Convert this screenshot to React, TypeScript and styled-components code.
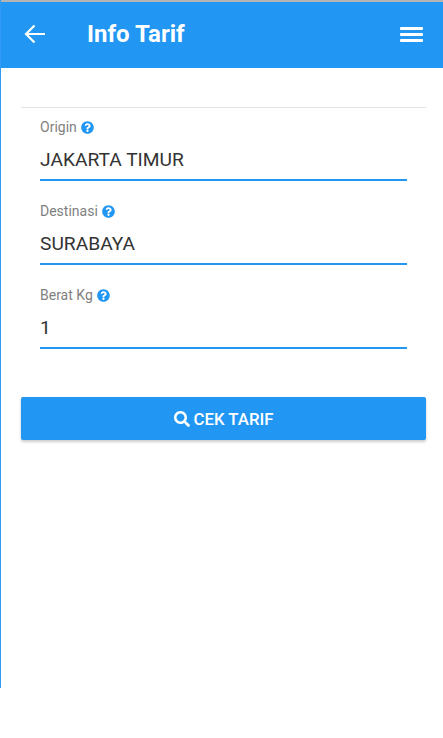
import React from "react";
import styled, { createGlobalStyle } from "styled-components";
import { FaQuestionCircle, FaSearch } from "react-icons/fa";

const GlobalStyle = createGlobalStyle`
  html, body {
    margin: 0;
    padding: 0;
    background: #fff;
    font-family: Roboto, "Liberation Sans", sans-serif;
  }
`;

const Screen = styled.div`
  width: 443px;
  height: 688px;
  box-sizing: border-box;
  border-left: 1px solid #2f9bf4;
  overflow: hidden;
`;

const Header = styled.header`
  height: 68px;
  margin-left: -1px;
  box-sizing: border-box;
  border-top: 2px solid #b4b4b4;
  background: #2196f3;
  display: flex;
  align-items: center;
  color: #fff;
  padding: 0 20px 2px 24px;
`;

const BackButton = styled.svg`
  width: 22px;
  height: 22px;
  flex: none;
`;

const Title = styled.h1`
  margin: 0 0 0 41px;
  flex: 1;
  font-size: 24px;
  line-height: 28px;
  font-weight: 700;
`;

const MenuButton = styled.div`
  width: 23px;
  display: flex;
  flex-direction: column;
  gap: 3px;
`;

const MenuBar = styled.span`
  display: block;
  height: 3px;
  background: #fff;
  border-radius: 1px;
`;

const Content = styled.main`
  padding: 39px 17px 0 20px;
`;

const Form = styled.form`
  border-top: 1px solid #e2e2e2;
  padding: 11px 19px 0;
  display: flex;
  flex-direction: column;
  gap: 22px;
`;

const Field = styled.div`
  display: flex;
  flex-direction: column;
`;

const Label = styled.label`
  display: flex;
  align-items: center;
  gap: 4px;
  height: 16px;
  font-size: 14px;
  line-height: 16px;
  color: #7f7f7f;
  svg {
    width: 13px;
    height: 13px;
    color: #2196f3;
  }
`;

const Value = styled.div`
  height: 46px;
  box-sizing: border-box;
  padding-top: 11px;
  border-bottom: 2px solid #2196f3;
  font-size: 19.2px;
  line-height: 28px;
  color: #333;
`;

const SubmitButton = styled.button`
  width: 100%;
  height: 43px;
  margin-top: 48px;
  border: none;
  border-radius: 2px;
  background: #2196f3;
  color: #fff;
  font-family: inherit;
  font-size: 16.8px;
  font-weight: 500;
  display: flex;
  align-items: center;
  justify-content: center;
  gap: 4px;
  box-shadow: 0 2px 3px rgba(0, 0, 0, 0.2);
  svg {
    width: 16px;
    height: 16px;
  }
`;

const fields = [
  { label: "Origin", value: "JAKARTA TIMUR" },
  { label: "Destinasi", value: "SURABAYA" },
  { label: "Berat Kg", value: "1" },
];

const App = () => {
  return (
    <Screen>
      <GlobalStyle />
      <Header>
        <BackButton viewBox="0 0 22 22" fill="none" stroke="currentColor" strokeWidth="2.2">
          <path d="M21 11H2M10.5 2.5L2 11l8.5 8.5" />
        </BackButton>
        <Title>Info Tarif</Title>
        <MenuButton>
          <MenuBar />
          <MenuBar />
          <MenuBar />
        </MenuButton>
      </Header>
      <Content>
        <Form>
          {fields.map((f) => (
            <Field key={f.label}>
              <Label>
                {f.label}
                <FaQuestionCircle />
              </Label>
              <Value>{f.value}</Value>
            </Field>
          ))}
        </Form>
        <SubmitButton type="button">
          <FaSearch />
          CEK TARIF
        </SubmitButton>
      </Content>
    </Screen>
  );
};

export default App;
